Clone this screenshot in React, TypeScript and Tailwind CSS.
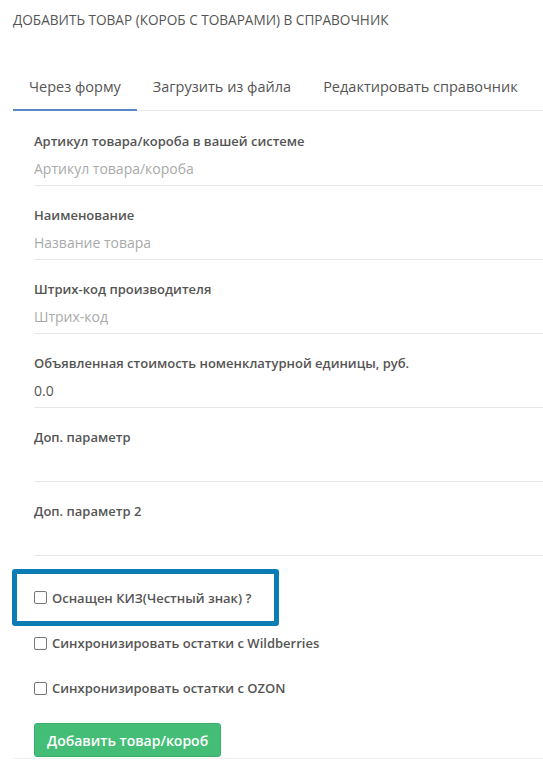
import { useState } from "react"

const fields = [
  { label: "Артикул товара/короба в вашей системе", placeholder: "Артикул товара/короба", value: "" },
  { label: "Наименование", placeholder: "Название товара", value: "" },
  { label: "Штрих-код производителя", placeholder: "Штрих-код", value: "" },
  { label: "Объявленная стоимость номенклатурной единицы, руб.", placeholder: "", value: "0.0" },
  { label: "Доп. параметр", placeholder: "", value: "" },
  { label: "Доп. параметр 2", placeholder: "", value: "" },
]

const tabs = ["Через форму", "Загрузить из файла", "Редактировать справочник"]

function Check({ label }: { label: string }) {
  return (
    <label className="flex items-center gap-[5px] text-[13px] font-semibold text-[#555] leading-[18px]">
      <span className="w-[13px] h-[13px] border border-[#767676] rounded-[2px] bg-white shrink-0" />
      {label}
    </label>
  )
}

export default function App() {
  const [tab, setTab] = useState(0)

  return (
    <div className="bg-white min-h-screen font-['Open_Sans',sans-serif] overflow-hidden">
      <div className="pl-[13px] pt-[11px]">
        <h1 className="text-[13.6px] leading-[18px] text-[#555] uppercase">
          Добавить товар (короб с товарами) в справочник
        </h1>

        <div className="mt-[36px] flex border-b border-[#e6e6e6]">
          {tabs.map((t, i) => (
            <button
              key={t}
              onClick={() => setTab(i)}
              className={`px-[16px] pt-[12px] pb-[12px] text-[14.5px] leading-[20px] text-[#555] whitespace-nowrap -mb-px border-b-2 ${
                tab === i ? "border-[#5b88c6]" : "border-transparent"
              }`}
            >
              {t}
            </button>
          ))}
        </div>

        <div className="pl-[21px] mt-px">
          {fields.map(f => (
            <div key={f.label} className="pt-[20px] pb-[3px] border-b border-[#e6e6e6]">
              <div className="text-[13px] leading-[18px] font-semibold text-[#555]">{f.label}</div>
              <input
                defaultValue={f.value}
                placeholder={f.placeholder}
                className="mt-[4px] w-full h-[28px] text-[14px] text-[#555] placeholder:text-[#aaa] outline-none bg-transparent"
              />
            </div>
          ))}
        </div>

        <div className="mt-[13px] ml-[-1px] w-[267px] h-[57px] border-[5px] border-[#0b7db4] rounded-[3px] flex items-center pl-[17px]">
          <Check label="Оснащен КИЗ(Честный знак) ?" />
        </div>

        <div className="pl-[21px] mt-[8px]">
          <Check label="Синхронизировать остатки с Wildberries" />
        </div>
        <div className="pl-[21px] mt-[27px]">
          <Check label="Синхронизировать остатки с OZON" />
        </div>

        <div className="pl-[21px] mt-[26px]">
          <button className="h-[34px] px-[12px] bg-[#44be77] border border-[#3cae6b] rounded-[3px] text-white text-[14px] font-semibold">
            Добавить товар/короб
          </button>
        </div>
        <div className="mt-px border-t border-[#f3f3f3]" />
      </div>
    </div>
  )
}
